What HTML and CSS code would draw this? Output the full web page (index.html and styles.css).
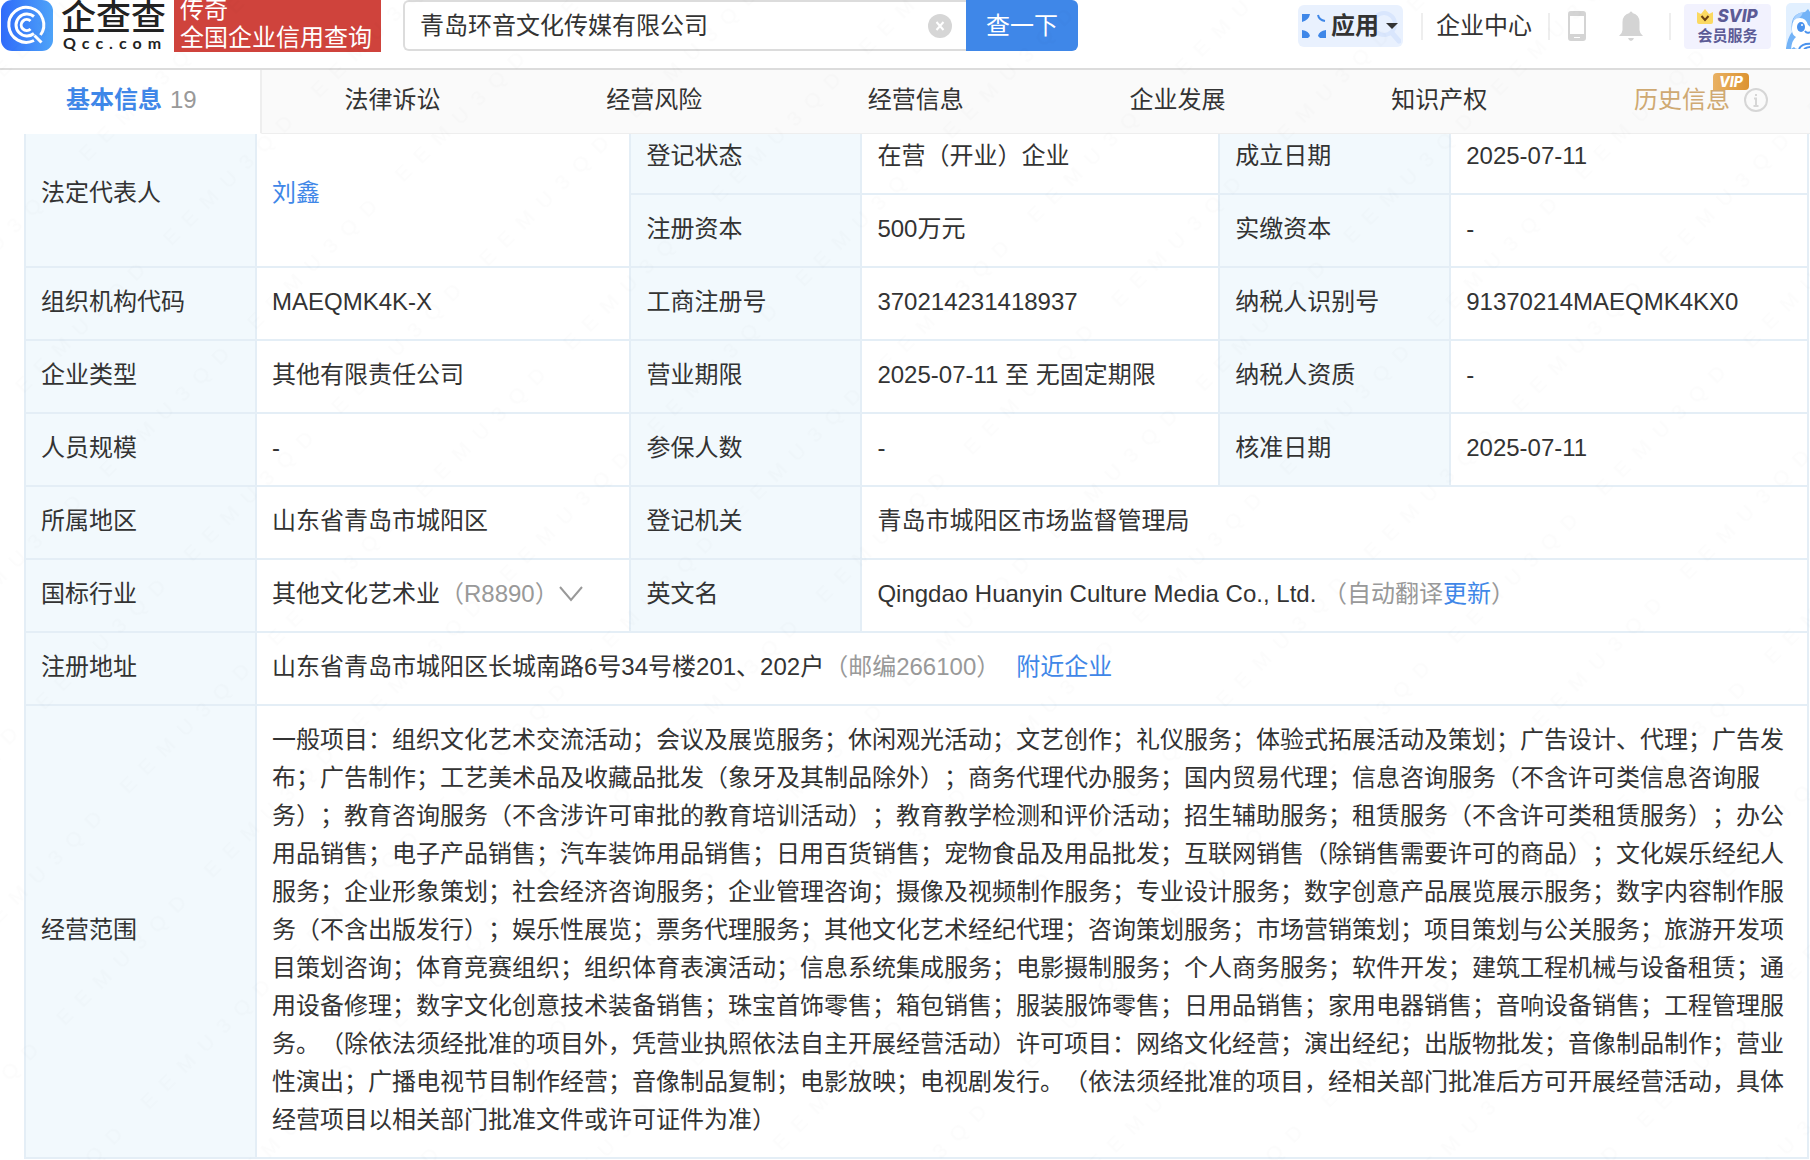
FILE: index.html
```html
<!DOCTYPE html>
<html lang="zh-CN">
<head>
  <meta charset="UTF-8">
  <title>青岛环音文化传媒有限公司 - 企查查</title>
  <link rel="stylesheet" href="styles.css">
</head>
<body>
  <header class="header">
    <a class="logo" href="#">
      <svg class="logo-mark" viewBox="0 0 52 52" aria-hidden="true">
        <defs>
          <linearGradient id="logoBg" x1="0" y1="0" x2="1" y2="0">
            <stop offset="0" stop-color="#2f6bfa"/>
            <stop offset="1" stop-color="#4ea3f8"/>
          </linearGradient>
        </defs>
        <rect width="52" height="51" rx="11" fill="url(#logoBg)"/>
        <g fill="none" stroke="#fff" stroke-width="3">
          <path d="M39.500 35A17.500 17.500 0 1 0 33 40.500M33.500 35.500l7 7"/>
          <path d="M33 16.500A11 11 0 1 0 33 33.500"/>
          <path d="M29.500 21A5.500 5.500 0 1 0 29.500 29"/>
        </g>
      </svg>
      <span class="logo-words">
        <span class="logo-cn">企查查</span>
        <span class="logo-en">Qcc.com</span>
      </span>
    </a>
    <div class="slogan">传奇<br>全国企业信用查询</div>

    <form class="search">
      <input class="search-input" type="text" aria-label="企业名称" value="青岛环音文化传媒有限公司">
      <button class="search-clear" type="reset" aria-label="清空">
        <svg viewBox="0 0 24 24"><circle cx="12" cy="12" r="12" fill="#d6d6d6"/><path d="M8.500 8l7 8M15.500 8l-7 8" stroke="#fff" stroke-width="2"/></svg>
      </button>
      <button class="search-btn" type="submit">查一下</button>
    </form>

    <nav class="tools">
      <button class="apps" type="button">
        <svg class="apps-lens" viewBox="0 0 30 36" aria-hidden="true"><circle cx="13" cy="14" r="11" fill="none" stroke="#d9e6fd" stroke-width="4"/><path d="M21 23l7 8" stroke="#d9e6fd" stroke-width="5" stroke-linecap="round"/></svg>
        <svg class="apps-icon" viewBox="0 0 24 24" aria-hidden="true">
          <path d="M0 0h8Q7 6 0 8zM0 16q7 1 8 6l-2 2H0zM24 16q-7 1-8 6l2 2h6z" fill="#3f87e8"/>
          <path d="M16 1q1 5 7 6" fill="none" stroke="#3f87e8" stroke-width="2"/>
        </svg>
        <span>应用</span>
        <svg class="caret" viewBox="0 0 12 6" aria-hidden="true"><path d="M0 0h12L6 6z" fill="#333"/></svg>
      </button>
      <i class="divider"></i>
      <a class="tool-link" href="#">企业中心</a>
      <i class="divider"></i>
      <a class="phone" href="#" aria-label="手机版">
        <svg viewBox="0 0 18 30"><path fill="#d4d4d4" fill-rule="evenodd" d="M3 0h12q3 0 3 3v24q0 3-3 3H3q-3 0-3-3V3q0-3 3-3zM2 5v18h14V5zM6 26v1h6v-1z"/></svg>
      </a>
      <a class="bell" href="#" aria-label="消息">
        <svg viewBox="0 0 24 30"><path fill="#d4d4d4" d="M10.500 2a1.500 1.500 0 0 1 3 0q7 2 7 9v8q0 3 3.500 6H0q3.500-3 3.500-6v-8q0-7 7-9zM9 27h6q-1 3-3 3t-3-3z"/></svg>
      </a>
      <i class="divider"></i>
      <a class="svip" href="#">
        <span class="svip-top">
          <svg viewBox="0 0 16 15" aria-hidden="true"><path d="M0 3l4 2 4-5 4 5 4-2v10q0 2-2 2H2q-2 0-2-2z" fill="#fbd961"/><path d="M4.500 7L8 11l3.500-4" fill="none" stroke="#6b3f12" stroke-width="2"/></svg>
          SVIP
        </span>
        <span>会员服务</span>
      </a>
      <a class="avatar" href="#" aria-label="我的">
        <svg viewBox="0 0 46 46">
          <rect width="46" height="46" rx="5" fill="#e2f0ff"/>
          <path d="M0 45Q2 34 6 29 3 10 19 9l3-3 2 3h22v37H0z" fill="#73b3f7"/>
          <path d="M7 17q3-7 10-8-1 5-9 10z" fill="#a9d2ff"/>
          <path d="M6 27Q5 15 14 15q6 0 8 7 3 2 4 6v18H12q-3 0-4-2l-3 2q1-9 5-12-4-2-4-7z" fill="#fff"/>
          <ellipse cx="15" cy="24" rx="4" ry="5" fill="#4a92ed"/>
          <circle cx="16" cy="22" r="1" fill="#fff"/>
          <path d="M19 28q2 3 5 1" stroke="#4a92ed" stroke-width="2" fill="none"/>
          <path d="M13 46q3-6 13-5M18 46q3-2 8-2" stroke="#4a92ed" stroke-width="2" fill="none"/>
        </svg>
      </a>
    </nav>
  </header>

  <nav class="tabs">
    <a class="tab active" href="#">基本信息 <span class="count">19</span></a>
    <a class="tab" href="#">法律诉讼</a>
    <a class="tab" href="#">经营风险</a>
    <a class="tab" href="#">经营信息</a>
    <a class="tab" href="#">企业发展</a>
    <a class="tab" href="#">知识产权</a>
    <a class="tab history" href="#">
      <span class="history-name">历史信息<em class="vip">VIP</em></span>
      <svg class="info" viewBox="0 0 24 24" aria-hidden="true"><circle cx="12" cy="12" r="11" fill="none" stroke="#d6d6d6" stroke-width="2"/><path d="M12 6v2M10 10.500h2V18M9.500 18h5" fill="none" stroke="#d6d6d6" stroke-width="2"/></svg>
    </a>
  </nav>

  <main class="content">
    <table class="info-table">
      <colgroup>
        <col class="col-label"><col class="col-first">
        <col class="col-label"><col>
        <col class="col-label"><col>
      </colgroup>
      <tr>
        <th rowspan="2">法定代表人</th>
        <td rowspan="2"><a href="#">刘鑫</a></td>
        <th>登记状态</th><td>在营（开业）企业</td>
        <th>成立日期</th><td>2025-07-11</td>
      </tr>
      <tr>
        <th>注册资本</th><td>500万元</td>
        <th>实缴资本</th><td>-</td>
      </tr>
      <tr>
        <th>组织机构代码</th><td>MAEQMK4K-X</td>
        <th>工商注册号</th><td>370214231418937</td>
        <th>纳税人识别号</th><td>91370214MAEQMK4KX0</td>
      </tr>
      <tr>
        <th>企业类型</th><td>其他有限责任公司</td>
        <th>营业期限</th><td>2025-07-11 至 无固定期限</td>
        <th>纳税人资质</th><td>-</td>
      </tr>
      <tr>
        <th>人员规模</th><td>-</td>
        <th>参保人数</th><td>-</td>
        <th>核准日期</th><td>2025-07-11</td>
      </tr>
      <tr>
        <th>所属地区</th><td>山东省青岛市城阳区</td>
        <th>登记机关</th><td colspan="3">青岛市城阳区市场监督管理局</td>
      </tr>
      <tr>
        <th>国标行业</th>
        <td>其他文化艺术业<span class="muted">（R8890）</span><svg class="chevron" viewBox="0 0 24 16" aria-hidden="true"><path d="M1 1l11 13L23 1" fill="none" stroke="#999" stroke-width="2"/></svg></td>
        <th>英文名</th>
        <td colspan="3">Qingdao Huanyin Culture Media Co., Ltd. <span class="muted">（自动翻译<a href="#">更新</a>）</span></td>
      </tr>
      <tr>
        <th>注册地址</th>
        <td colspan="5">山东省青岛市城阳区长城南路6号34号楼201、202户<span class="muted">（邮编266100）</span><a class="nearby" href="#">附近企业</a></td>
      </tr>
      <tr>
        <th>经营范围</th>
        <td colspan="5">一般项目：组织文化艺术交流活动；会议及展览服务；休闲观光活动；文艺创作；礼仪服务；体验式拓展活动及策划；广告设计、代理；广告发布；广告制作；工艺美术品及收藏品批发（象牙及其制品除外）；商务代理代办服务；国内贸易代理；信息咨询服务（不含许可类信息咨询服务）；教育咨询服务（不含涉许可审批的教育培训活动）；教育教学检测和评价活动；招生辅助服务；租赁服务（不含许可类租赁服务）；办公用品销售；电子产品销售；汽车装饰用品销售；日用百货销售；宠物食品及用品批发；互联网销售（除销售需要许可的商品）；文化娱乐经纪人服务；企业形象策划；社会经济咨询服务；企业管理咨询；摄像及视频制作服务；专业设计服务；数字创意产品展览展示服务；数字内容制作服务（不含出版发行）；娱乐性展览；票务代理服务；其他文化艺术经纪代理；咨询策划服务；市场营销策划；项目策划与公关服务；旅游开发项目策划咨询；体育竞赛组织；组织体育表演活动；信息系统集成服务；电影摄制服务；个人商务服务；软件开发；建筑工程机械与设备租赁；通用设备修理；数字文化创意技术装备销售；珠宝首饰零售；箱包销售；服装服饰零售；日用品销售；家用电器销售；音响设备销售；工程管理服务。（除依法须经批准的项目外，凭营业执照依法自主开展经营活动）许可项目：网络文化经营；演出经纪；出版物批发；音像制品制作；营业性演出；广播电视节目制作经营；音像制品复制；电影放映；电视剧发行。（依法须经批准的项目，经相关部门批准后方可开展经营活动，具体经营项目以相关部门批准文件或许可证件为准）</td>
      </tr>
    </table>
  </main>

  <svg class="watermark" aria-hidden="true">
    <defs>
      <pattern id="mark" width="209" height="119" patternUnits="userSpaceOnUse" patternTransform="translate(189 270) rotate(-45)">
        <text x="4" y="90" xml:space="preserve">E  E  M  U  3  Q  D</text>
      </pattern>
    </defs>
    <rect width="100%" height="100%" fill="url(#mark)"/>
  </svg>
</body>
</html>
```

FILE: styles.css
```css
* {
  box-sizing: border-box;
}

body {
  margin: 0;
  background: #fff;
  color: #333;
  font-family: "Liberation Sans", "Noto Sans CJK SC", sans-serif;
  font-size: 24px;
  line-height: 38px;
  text-spacing-trim: space-all;
  overflow-x: hidden;
}

a {
  color: #3f87e8;
  text-decoration: none;
}

button,
input {
  font: inherit;
  color: inherit;
}

button {
  border: none;
  cursor: pointer;
}

svg {
  display: block;
}

/* header */
.header {
  position: relative;
  z-index: 2;
  display: flex;
  align-items: flex-start;
  height: 70px;
  background: #fff;
  border-bottom: 2px solid #dcdcdc;
}

.logo {
  display: flex;
  gap: 8px;
  padding-left: 1px;
  color: #222;
}

.logo-mark {
  width: 52px;
  height: 52px;
}

.logo-words {
  display: flex;
  flex-direction: column;
  width: 105px;
}

.logo-cn {
  font-size: 35px;
  font-weight: 500;
  line-height: 36px;
}

.logo-en {
  padding-left: 2px;
  font-family: Lato, sans-serif;
  font-size: 16px;
  font-weight: bold;
  line-height: 14px;
  letter-spacing: 6px;
}

.slogan {
  display: flex;
  flex-direction: column;
  justify-content: flex-end;
  width: 207px;
  height: 52px;
  margin-left: 8px;
  padding-left: 6px;
  background: #cf433c;
  color: #fff;
  line-height: 28px;
}

.search {
  position: relative;
  display: flex;
  flex: 0 0 675px;
  height: 51px;
  margin-left: 22px;
}

.search-input {
  flex: 1;
  min-width: 0;
  padding: 0 50px 0 15px;
  border: 2px solid #dcdcdc;
  border-right: none;
  border-radius: 6px 0 0 6px;
  outline: none;
  background: #fff;
}

.search-clear {
  position: absolute;
  top: 14px;
  right: 126px;
  width: 24px;
  height: 24px;
  padding: 0;
  background: none;
}

.search-btn {
  width: 112px;
  padding: 0;
  border-radius: 0 6px 6px 0;
  background: #3f87e8;
  color: #fff;
}

.tools {
  display: flex;
  align-items: center;
  flex: none;
  height: 52px;
  margin-left: auto;
  margin-right: -22px;
}

.apps {
  position: relative;
  display: flex;
  align-items: center;
  width: 105px;
  height: 42px;
  margin-right: 2px;
  padding: 0 5px 0 4px;
  border-radius: 6px;
  background: #e9f1fe;
  font-weight: bold;
}

.apps span {
  position: relative;
  margin: 0 7px 0 5px;
}

.apps-icon {
  width: 24px;
  height: 24px;
}

.apps-lens {
  position: absolute;
  right: 2px;
  top: 5px;
  width: 30px;
  height: 36px;
}

.caret {
  position: relative;
  width: 12px;
  height: 6px;
}

.divider {
  width: 2px;
  height: 27px;
  margin: 0 16px;
  background: #eee;
}

.tool-link {
  margin-left: -3px;
  color: #333;
}

.tools .tool-link + .divider {
  margin-right: 18px;
}

.phone svg {
  width: 18px;
  height: 30px;
}

.bell {
  margin: 0 10px 0 33px;
}

.bell svg {
  width: 24px;
  height: 30px;
}

.svip {
  display: flex;
  flex-direction: column;
  align-items: center;
  justify-content: center;
  width: 87px;
  height: 45px;
  margin-right: 15px;
  margin-left: -3px;
  border-radius: 4px;
  background: #f2f2fe;
  color: #5c5b96;
  font-size: 15px;
  font-weight: bold;
  line-height: 20px;
}

.svip-top {
  display: flex;
  align-items: center;
  gap: 4px;
  font-family: Inter, sans-serif;
  font-size: 17px;
  font-style: italic;
  font-weight: 800;
}

.svip-top svg {
  width: 16px;
  height: 15px;
}

.avatar svg {
  width: 46px;
  height: 46px;
}

/* tabs */
.tabs {
  position: relative;
  z-index: 1;
  display: grid;
  grid-template-columns: repeat(6, 1fr) 240px;
  height: 64px;
  background: #fafafa;
}

.tab {
  display: flex;
  align-items: center;
  justify-content: center;
  gap: 8px;
  padding-bottom: 4px;
  border-bottom: 1px solid #eee;
  color: #333;
}

.tab.active {
  padding-left: 3px;
  border-right: 2px solid #eee;
  border-bottom-color: #fff;
  background: #fff;
  color: #3f87e8;
  font-weight: bold;
}

.count {
  color: #999;
  font-weight: normal;
}

.tab.history {
  justify-content: flex-end;
  gap: 14px;
  padding-right: 42px;
  color: #cfa972;
}

.history-name {
  position: relative;
}

.vip {
  position: absolute;
  top: -8px;
  right: -19px;
  width: 36px;
  height: 17px;
  border-radius: 4px 4px 4px 0;
  background: linear-gradient(90deg, #e9b163, #dc9331);
  color: #fff;
  font-family: Inter, sans-serif;
  font-size: 14px;
  font-weight: 800;
  line-height: 17px;
  text-align: center;
}

.info {
  width: 24px;
  height: 24px;
}

/* the first row slides under the tabs */
.content {
  margin-top: -14px;
  padding: 0 1px 0 24px;
}

.info-table {
  width: 100%;
  table-layout: fixed;
  border-collapse: collapse;
}

.col-label {
  width: 231px;
}

.col-first {
  width: 21%;
}

.info-table th,
.info-table td {
  padding: 15px 15px 18px;
  border: 2px solid #e4eef6;
  font-weight: normal;
  text-align: left;
}

.info-table th {
  background: #f2f9fd;
}

.muted {
  color: #999;
}

.chevron {
  display: inline-block;
  width: 24px;
  height: 16px;
}

.nearby {
  margin-left: 16px;
}

.watermark {
  position: fixed;
  inset: 0;
  z-index: 3;
  width: 100%;
  height: 100%;
  pointer-events: none;
}

.watermark text {
  fill: #000;
  fill-opacity: 0.012;
  font-size: 21px;
  white-space: pre;
}
```
